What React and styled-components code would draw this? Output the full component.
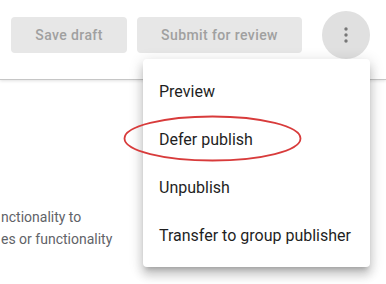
import styled, { createGlobalStyle } from "styled-components";

const GlobalStyle = createGlobalStyle`
  html, body {
    margin: 0;
    padding: 0;
    background: #ffffff;
    font-family: Roboto, "Noto Sans", Arial, sans-serif;
  }
`;

const Page = styled.div`
  width: 386px;
  height: 284px;
  overflow: hidden;
  position: relative;
  background: #ffffff;
`;

const Header = styled.div`
  height: 70px;
  padding: 0 0 9px 11px;
  display: flex;
  align-items: center;
  border-bottom: 1px solid #c6c6c6;
  box-shadow: 0 1px 3px rgba(0, 0, 0, 0.12);
`;

const ActionButton = styled.button`
  box-sizing: border-box;
  width: ${(props) => props.$width}px;
  height: 36px;
  padding: 0;
  margin-right: ${(props) => props.$gap || 0}px;
  border: none;
  border-radius: 4px;
  background: #e7e7e7;
  color: #a0a0a0;
  font-family: Roboto, "Noto Sans", Arial, sans-serif;
  font-size: 14px;
  font-weight: 500;
  letter-spacing: 0.4px;
  cursor: default;
`;

const MenuAnchor = styled.div`
  position: relative;
  margin-left: 20px;
`;

const KebabButton = styled.button`
  width: 48px;
  height: 48px;
  border: none;
  border-radius: 50%;
  background: #e0e0e0;
  display: flex;
  align-items: center;
  justify-content: center;
  padding: 0;
`;

const Menu = styled.ul`
  position: absolute;
  top: 48px;
  right: 0;
  width: 227px;
  margin: 0;
  padding: 8px 0;
  list-style: none;
  background: #ffffff;
  border-radius: 4px;
  box-shadow: 0 5px 5px -3px rgba(0, 0, 0, 0.2),
    0 8px 10px 1px rgba(0, 0, 0, 0.14), 0 3px 14px 2px rgba(0, 0, 0, 0.12);
  z-index: 10;
`;

const MenuItem = styled.li`
  position: relative;
  height: 48px;
  padding: 0 16px;
  display: flex;
  align-items: center;
  font-size: 16px;
  color: #1f1f1f;
  white-space: nowrap;
`;

const Highlight = styled.svg`
  position: absolute;
  left: -19px;
  top: 1px;
  overflow: visible;
  pointer-events: none;
`;

const Body = styled.div`
  padding: 126px 0 0 1px;
`;

const Description = styled.p`
  margin: 0;
  font-size: 14px;
  line-height: 22px;
  color: #5f6368;
  white-space: nowrap;
`;

function MoreIcon() {
  return (
    <svg width="24" height="24" viewBox="0 0 24 24">
      <circle cx="12" cy="6" r="1.7" fill="#777777" />
      <circle cx="12" cy="12" r="1.7" fill="#777777" />
      <circle cx="12" cy="18" r="1.7" fill="#777777" />
    </svg>
  );
}

const items = ["Preview", "Defer publish", "Unpublish", "Transfer to group publisher"];

export default function App() {
  return (
    <Page>
      <GlobalStyle />
      <Header>
        <ActionButton $width={116} $gap={10}>Save draft</ActionButton>
        <ActionButton $width={165}>Submit for review</ActionButton>
        <MenuAnchor>
          <KebabButton aria-label="More">
            <MoreIcon />
          </KebabButton>
          <Menu>
            {items.map((item) => (
              <MenuItem key={item}>
                {item}
                {item === "Defer publish" && (
                  <Highlight width="177" height="45" viewBox="0 0 177 45">
                    <ellipse
                      cx="88.5"
                      cy="22.5"
                      rx="88"
                      ry="22"
                      fill="none"
                      stroke="#d83b3b"
                      strokeWidth="1.8"
                    />
                  </Highlight>
                )}
              </MenuItem>
            ))}
          </Menu>
        </MenuAnchor>
      </Header>
      <Body>
        <Description>
          nctionality to
          <br />
          es or functionality
        </Description>
      </Body>
    </Page>
  );
}
